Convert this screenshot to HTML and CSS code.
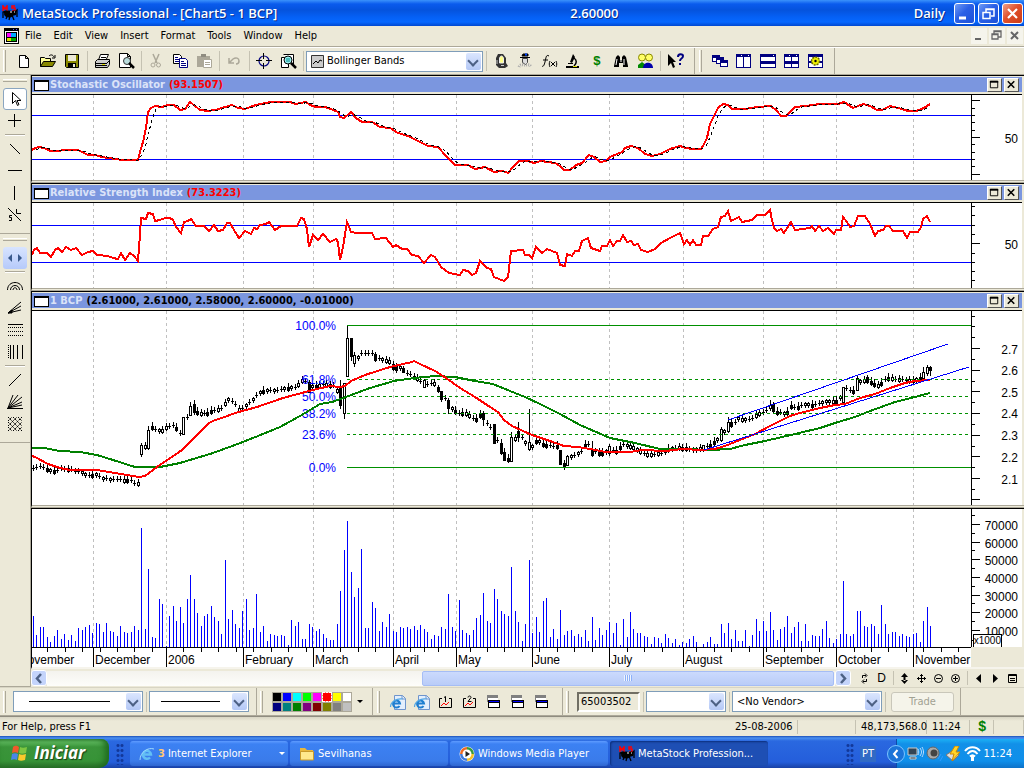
FILE: index.html
```html
<!DOCTYPE html>
<html lang="en">
<head>
    <meta charset="utf-8">
    <title>MetaStock Professional - [Chart5 - 1 BCP]</title>
    <link rel="stylesheet" href="styles.css">
</head>
<body>
    <!-- shared icons -->
    <svg class="defs" width="0" height="0" aria-hidden="true">
        <symbol id="spider" viewBox="0 0 16 16">
            <path d="M1 6V1l2 3 2-3v5M13 1h-3v2h3v3h-3" fill="none" stroke="#f00" stroke-width="1.500"/>
            <ellipse cx="7" cy="9" rx="5" ry="3.500"/><circle cx="12" cy="8" r="2.500"/>
            <path d="M1 13V7l3-1 2 3-2 5M8 11l-1 4M10 10l2 5M12 8l3-3v7M2 8l3-2" fill="none" stroke="#000" stroke-width="1.300"/>
            <path d="M8 7h2M12 7h1" stroke="#fff"/>
        </symbol>
        <symbol id="ie" viewBox="0 0 18 18">
            <path d="M5.500 2.500h8l3 3v11h-11z" fill="#e4effc" stroke="#6f95cc"/>
            <path d="M13 2.500v3.500h3.500" fill="none" stroke="#6f95cc"/>
            <path d="M4 10.500h7A3.500 3.500 0 1 0 10.500 13" fill="none" stroke="#1f7fd0" stroke-width="2"/>
            <path d="M1.500 14c0-5 6-9 12-8" fill="none" stroke="#4fa6e6" stroke-width="1.200"/>
        </symbol>
        <symbol id="win" viewBox="0 0 14 16">
            <g shape-rendering="crispEdges">
                <path d="M0 1h11v3H0zM0 4h1v4H0z" fill="#808080"/><path d="M1 4h10v3H1z" fill="#fff"/>
                <path d="M1 6h12v8H1z"/><path d="M2 7h10v1H2z" fill="#00f"/><path d="M2 9h10v4H2z" fill="#fff"/>
            </g>
        </symbol>
        <symbol id="max" viewBox="0 0 14 13"><path d="M2.500 2.500h8v7h-8z" fill="none" stroke="#000"/><path d="M2 3h9" stroke="#000" stroke-width="2"/></symbol>
        <symbol id="close" viewBox="0 0 14 13"><path d="M3 2.500l7 7M10 2.500l-7 7" stroke="#000" stroke-width="1.700"/></symbol>
    </svg>

    <header class="titlebar">
        <svg class="app-icon" width="16" height="16"><use href="#spider"/></svg>
        <h1>MetaStock Professional - [Chart5 - 1 BCP]</h1>
        <span class="last-price">2.60000</span>
        <span class="period">Daily</span>
        <button class="win-btn" aria-label="Minimize"><svg width="19" height="19"><path d="M4 14h7" stroke="#fff" stroke-width="3"/></svg></button>
        <button class="win-btn" aria-label="Restore"><svg width="19" height="19"><path d="M7 8V5h8v7h-3M7 5.500h8" fill="none" stroke="#fff" stroke-width="1.500"/><path d="M4 8.500h7v6H4z" fill="none" stroke="#fff" stroke-width="1.500"/></svg></button>
        <button class="win-btn win-close" aria-label="Close"><svg width="19" height="19"><path d="M5 5l9 9M14 5l-9 9" stroke="#fff" stroke-width="2.200"/></svg></button>
    </header>

    <nav class="menubar">
        <svg width="15" height="16" shape-rendering="crispEdges"><path d="M0 0h15v16H0z"/><path d="M1 3h13v12H1z" fill="#fff"/><path d="M9 1h1v1H9zM12 1h1v1h-1z" fill="#55f"/><path d="M2 4h11v10H2z"/><path d="M3 5h9v4H3z" fill="#f0f"/><path d="M7 5h5v4H7z" fill="#0af"/><path d="M3 10h9v3H3z" fill="#0a0"/><path d="M3 10h4v3H3z" fill="#dd0"/></svg>
        <a href="#">File</a>
        <a href="#">Edit</a>
        <a href="#">View</a>
        <a href="#">Insert</a>
        <a href="#">Format</a>
        <a href="#">Tools</a>
        <a href="#">Window</a>
        <a href="#">Help</a>
        <span class="mdi">
            <button aria-label="Minimize chart"><svg width="15" height="15"><path d="M4 11h6" stroke="#666" stroke-width="2"/></svg></button>
            <button aria-label="Restore chart"><svg width="15" height="15"><path d="M5 6V3h7v6H9M5 3.500h7M3 6h6v5H3zM3 6.500h6" fill="none" stroke="#666" stroke-width="1.300"/></svg></button>
            <button aria-label="Close chart"><svg width="15" height="15"><path d="M4 4l7 7M11 4l-7 7" stroke="#666" stroke-width="2"/></svg></button>
        </span>
    </nav>

    <div class="toolbar">
        <div class="band">
            <i class="grip"></i>
            <button class="tool" aria-label="New"><svg width="16" height="16"><path d="M3.500 2.500h6l3 3v9h-9zM9.500 2.500v3h3" fill="#fff" stroke="#000"/></svg></button>
            <button class="tool" aria-label="Open"><svg width="16" height="16"><path d="M.5 13.500v-9h4l1 1h5v3" fill="#ff9" stroke="#000"/><path d="M.5 13.500l3-5h12l-3 5z" fill="#880" stroke="#000"/><path d="M9 3c2-2 4-1 5 1M15 2v3h-3" fill="none" stroke="#000"/></svg></button>
            <button class="tool" aria-label="Save"><svg width="16" height="16"><path d="M1.500 1.500h13v13h-12l-1-1z" fill="#880" stroke="#000"/><path d="M4 2h8v6H4z" fill="#ece9d8"/><path d="M4 10h8v5H4z"/><path d="M9 11h2v3H9z" fill="#ece9d8"/></svg></button>
            <i class="sep"></i>
            <button class="tool" aria-label="Print"><svg width="17" height="16"><path d="M4.500 7l2-5.500h8L12 7" fill="#fff" stroke="#000"/><path d="M1.500 8.500l2-2h12v5l-2 3H1.500z" fill="#ccc" stroke="#000"/><path d="M2 10.500h11M2 12.500h11M7 4.500h5M13 10l3-3" stroke="#000"/><path d="M8 11.500h3" stroke="#dd0"/></svg></button>
            <button class="tool" aria-label="Print Preview"><svg width="17" height="16"><path d="M1.500.5h8l3 3v11h-11zM9.500.5v3h3" fill="#fff" stroke="#000"/><circle cx="9" cy="8" r="3.500" fill="#bdd" stroke="#333"/><path d="M11 10l5 5" stroke="#000" stroke-width="2.500"/></svg></button>
            <i class="sep"></i>
            <button class="tool" aria-label="Cut" disabled><svg width="16" height="16"><path d="M5 1l4 9M11 1L7 10" fill="none" stroke="#aca899" stroke-width="1.500"/><circle cx="5" cy="12" r="2" fill="none" stroke="#aca899"/><circle cx="10.500" cy="12" r="2" fill="none" stroke="#aca899"/></svg></button>
            <button class="tool" aria-label="Copy"><svg width="17" height="16"><path d="M1.500 1.500h6l2 2v7h-8z" fill="#fff" stroke="#000"/><path d="M7.500 5.500h6l2 2v7h-8z" fill="#fff" stroke="#000080"/><path d="M3 4.500h3M3 6.500h4M3 8.500h4M9 8.500h3M9 10.500h5M9 12.500h5" stroke="#000080"/></svg></button>
            <button class="tool" aria-label="Paste" disabled><svg width="17" height="16"><path d="M1 3h13v11H1z" fill="#aca899"/><path d="M5 1h5v3H5z" fill="#8f8c80"/><path d="M7.500 6.500h8v8h-8z" fill="#fff" stroke="#aca899"/><path d="M9 9.500h5M9 11.500h5" stroke="#aca899"/></svg></button>
            <i class="sep"></i>
            <button class="tool" aria-label="Undo" disabled><svg width="16" height="16"><path d="M3 10l4-4c3-2 6-1 6 2 0 2-1 3-3 3M3 5v5h5" fill="none" stroke="#aca899" stroke-width="1.500"/></svg></button>
            <i class="sep"></i>
            <button class="tool" aria-label="Crosshair"><svg width="16" height="16"><circle cx="8" cy="8" r="5" fill="none" stroke="#000080" stroke-width="1.200"/><path d="M7.500 0v6M7.500 10v6M0 7.500h6M10 7.500h6" stroke="#000"/></svg></button>
            <button class="tool" aria-label="Explorer"><svg width="17" height="16"><path d="M3.500 1.500h10v10M1.500 4.500h7v10h-7z" fill="#fff" stroke="#000"/><circle cx="8" cy="7" r="4" fill="#9ee" stroke="#000"/><path d="M6 6h4M6 8h4" stroke="#088"/><path d="M11 10l5 5" stroke="#000" stroke-width="2.500"/></svg></button>
            <i class="sep"></i>
            <span class="combo combo-indicator">
                <svg class="combo-icon" width="13" height="13"><path d="M.5.5h12v12H.5z" fill="#ccc" stroke="#333"/><path d="M2 9l3-3 2 2 2-3 2 1" fill="none" stroke="#000"/></svg>
                <select aria-label="Indicator"><option>Bollinger Bands</option></select>
            </span>
            <i class="sep"></i>
            <button class="tool" aria-label="Commentary"><svg width="16" height="16"><path d="M3 5l2-4h5l3 4v5l2 3-3 2H6l-3-3z" fill="#333"/><path d="M6.500 6c0-4 4-4 4 0v4h-4z" fill="#ff8" stroke="#eee"/><path d="M4 7v4M8 12.500h3" stroke="#ccc"/></svg></button>
            <button class="tool" aria-label="Expert Advisor"><svg width="16" height="16"><path d="M3 4.500h10M5 3h6V1H6z" stroke="#000"/><path d="M8 1.500h2" stroke="#04f" stroke-width="2"/><path d="M5.500 5.500h5v4l-2 2-3-2z" fill="#ddd" stroke="#444"/><path d="M2 14c1-3 4-2 6-2s5-1 6 2" fill="none" stroke="#aaa" stroke-width="3" stroke-dasharray="1 1"/></svg></button>
            <button class="tool" aria-label="Indicator Builder"><svg width="17" height="16"><path d="M8 3c-3-2-3 2-4 6s-2 5-3 4M2 7h5M9 8c-1 2-1 4 0 6M15 8c1 2 1 4 0 6M10 9l4 4M14 9l-4 4" fill="none" stroke="#000"/></svg></button>
            <button class="tool" aria-label="System Tester"><svg width="16" height="16"><path d="M8 1l2 3-3 6-2-1zM1 13h13v2H1zM3 10h5v1H3z"/><path d="M9 5c3 2 3 5 0 8" fill="none" stroke="#000" stroke-width="1.500"/><path d="M8 13.500h4" stroke="#dd0"/></svg></button>
            <button class="tool dollar" aria-label="Orders">$</button>
            <button class="tool" aria-label="Find"><svg width="16" height="16"><path d="M1 13l2-9 2-2 2 2v3h2V4l2-2 2 2 2 9v1h-5v-4H6v4H1z"/><path d="M3 12l1-6M11 12V6M8 7v2" stroke="#fff"/></svg></button>
            <button class="tool" aria-label="Users"><svg width="17" height="16"><circle cx="5" cy="4.500" r="3.500" fill="#ff6" stroke="#880"/><path d="M1 15v-3l4-3 4 3v3z" fill="#080"/><circle cx="12" cy="4.500" r="3.500" fill="#ff6" stroke="#880"/><path d="M6 15c0-7 10-7 10 0z" fill="#00a"/></svg></button>
            <i class="sep"></i>
            <button class="tool" aria-label="What's this?"><svg width="17" height="16"><path d="M1 1v12l3-3 2 5 2-1-2-5h3z"/><path d="M11 4c0-4 5-3 5-1 0 3-3 2-3 5M13 10v2" fill="none" stroke="#000080" stroke-width="2"/></svg></button>
        </div>
        <div class="band band-windows">
            <i class="grip"></i>
            <button class="tool" aria-label="Cascade"><svg width="17" height="16" shape-rendering="crispEdges"><path d="M0 2h8v7H0z" fill="#000080"/><path d="M1 5h6v3H1z" fill="#fff"/><path d="M4 4h8v7H4z" fill="#000080"/><path d="M5 7h6v3H5z" fill="#fff"/><path d="M8 7h8v7H8z" fill="#000080"/><path d="M9 10h6v3H9z" fill="#fff"/></svg></button>
            <button class="tool" aria-label="Tile Columns"><svg width="16" height="16" shape-rendering="crispEdges"><path d="M0 1h15v14H0z" fill="#000080"/><path d="M1 4h6v10H1zM8 4h6v10H8z" fill="#fff"/><path d="M5 2h1v1H5zM12 2h1v1h-1z" fill="#fff"/></svg></button>
            <button class="tool" aria-label="Tile Rows"><svg width="16" height="16" shape-rendering="crispEdges"><path d="M0 1h16v14H0z" fill="#000080"/><path d="M1 4h14v4H1zM1 11h14v3H1z" fill="#fff"/><path d="M13 2h1v1h-1z" fill="#fff"/></svg></button>
            <button class="tool" aria-label="Tile"><svg width="16" height="16" shape-rendering="crispEdges"><path d="M0 1h15v14H0z" fill="#000080"/><path d="M1 4h6v4H1zM8 4h6v4H8zM1 11h6v3H1zM8 11h6v3H8z" fill="#fff"/><path d="M5 2h1v1H5zM12 2h1v1h-1z" fill="#fff"/></svg></button>
            <button class="tool" aria-label="Stack Options"><svg width="16" height="16"><path d="M0 1h15v14H0z" fill="#000080"/><path d="M1 4h13v4H1zM1 10h13v4H1z" fill="#fff"/><circle cx="7.500" cy="8" r="4" fill="#ee0" stroke="#660" stroke-width="1.500" stroke-dasharray="2 1"/><circle cx="7.500" cy="8" r="1.200"/></svg></button>
        </div>
    </div>

    <div class="workspace">
        <aside class="side">
            <div class="side-band">
                <i class="hgrip"></i>
                <button class="side-tool pointer" aria-label="Pointer"><svg width="16" height="16"><path d="M5.500 1.500v11l3-3 2 5 1.500-1-2-4h4z" fill="#fff" stroke="#000"/></svg></button>
                <button class="side-tool" aria-label="Crosshair pointer"><svg width="16" height="16"><path d="M7.500 1v13M1 7.500h13" stroke="#000"/></svg></button>
                <i class="hsep"></i>
                <button class="side-tool" aria-label="Trendline"><svg width="16" height="16"><path d="M3 3l10 10" stroke="#000"/></svg></button>
                <button class="side-tool" aria-label="Horizontal line"><svg width="16" height="16"><path d="M1 7.500h14" stroke="#000"/></svg></button>
                <button class="side-tool" aria-label="Vertical line"><svg width="16" height="16"><path d="M7.500 1v14" stroke="#000"/></svg></button>
                <button class="side-tool" aria-label="Speed lines"><svg width="16" height="16"><path d="M1 1l13 13M9.500 2v4.500H14M5 8.500H2.500v2h2v3H2" fill="none" stroke="#000"/></svg></button>
            </div>
            <div class="side-band">
                <i class="hgrip"></i>
                <button class="side-tool active" aria-label="Scroll"><svg width="16" height="16"><path d="M5 4v8L1 8zM11 4v8l4-4z" fill="#3b5a8c"/></svg></button>
                <i class="hsep"></i>
                <button class="side-tool" aria-label="Fibonacci arcs"><svg width="16" height="16"><path d="M.5 12c0-10 15-10 15 0M3.500 12c0-6 9-6 9 0M6 12c0-3 4-3 4 0" fill="none" stroke="#000"/></svg></button>
                <button class="side-tool" aria-label="Fibonacci fan"><svg width="16" height="16"><path d="M1 13L14 2M1 13l13-7M1 13l13-3M1 13l4-3v3z" stroke="#000"/></svg></button>
                <button class="side-tool" aria-label="Fibonacci retracement"><svg width="16" height="16"><path d="M1 2.500h15" stroke="#000"/><path d="M1 5.500h15M1 9.500h15M1 13.500h15" stroke="#000" stroke-dasharray="1 1"/></svg></button>
                <button class="side-tool" aria-label="Fibonacci time zones"><svg width="16" height="16"><path d="M3.500 1v14M6.500 1v14M10.500 1v14M15.500 1v14" stroke="#000"/><path d="M1.500 1v14" stroke="#000" stroke-dasharray="1 1"/></svg></button>
                <i class="hsep"></i>
                <button class="side-tool" aria-label="Gann line"><svg width="16" height="16"><path d="M2 14L14 2" stroke="#000"/></svg></button>
                <button class="side-tool" aria-label="Gann fan"><svg width="16" height="16"><path d="M0 14.500h16M1 14L6 1M1 14L11 1M1 14L15 3M1 14l14-6M1 14l14-3" stroke="#000"/></svg></button>
                <button class="side-tool" aria-label="Gann grid"><svg width="16" height="16"><path d="M1 5l4-4M1 10l9-9M1 15L15 1M6 15l9-9M11 15l4-4M1 11l4 4M1 6l9 9M1 1l14 14M6 1l9 9M11 1l4 4" stroke="#000" stroke-dasharray="2 1"/></svg></button>
            </div>
        </aside>

        <main class="panes">
            <section class="pane">
                <header class="pane-title">
                    <i class="pane-icon"></i><h2>Stochastic Oscillator</h2><b class="value">(93.1507)</b>
                    <button class="pane-btn" aria-label="Maximize"><svg width="13" height="12"><use href="#max"/></svg></button>
                    <button class="pane-btn" aria-label="Close"><svg width="13" height="12"><use href="#close"/></svg></button>
                </header>
                <div class="plot-row"><svg class="plot plot-small" id="stoch"></svg><svg class="axis plot-small" id="stoch-axis"></svg></div>
            </section>
            <section class="pane">
                <header class="pane-title">
                    <i class="pane-icon"></i><h2>Relative Strength Index</h2><b class="value">(73.3223)</b>
                    <button class="pane-btn" aria-label="Maximize"><svg width="13" height="12"><use href="#max"/></svg></button>
                    <button class="pane-btn" aria-label="Close"><svg width="13" height="12"><use href="#close"/></svg></button>
                </header>
                <div class="plot-row"><svg class="plot plot-small" id="rsi"></svg><svg class="axis plot-small" id="rsi-axis"></svg></div>
            </section>
            <section class="pane">
                <header class="pane-title">
                    <i class="pane-icon"></i><h2>1 BCP</h2><b>(2.61000, 2.61000, 2.58000, 2.60000, -0.01000)</b>
                    <button class="pane-btn" aria-label="Maximize"><svg width="13" height="12"><use href="#max"/></svg></button>
                    <button class="pane-btn" aria-label="Close"><svg width="13" height="12"><use href="#close"/></svg></button>
                </header>
                <div class="plot-row"><svg class="plot plot-price" id="price"></svg><svg class="axis plot-price" id="price-axis"></svg></div>
            </section>
            <section class="pane pane-volume">
                <div class="plot-row"><svg class="plot plot-volume" id="volume"></svg><svg class="axis plot-volume" id="volume-axis"></svg></div>
                <svg class="timeline" id="timeline"></svg>
            </section>

            <div class="scroll-row">
                <button class="arrow" aria-label="Scroll left"><svg width="14" height="13"><path d="M9 2L5 6.500 9 11" fill="none" stroke="#4d6185" stroke-width="2.500"/></svg></button>
                <div class="track"><div class="thumb"></div></div>
                <button class="arrow" aria-label="Scroll right"><svg width="14" height="13"><path d="M5 2l4 4.500L5 11" fill="none" stroke="#4d6185" stroke-width="2.500"/></svg></button>
                <div class="scroll-tools">
                    <button aria-label="Refresh"><svg width="11" height="11"><path d="M3.500 5V2.500H7M6 .5l2 2-2 2M7.500 6v2.500H4M5 6.500l-2 2 2 2" fill="none" stroke="#000"/></svg></button>
                    <button class="daily" aria-label="Periodicity">D</button>
                    <i class="sep"></i>
                    <button aria-label="Rescale"><svg width="11" height="11"><path d="M5.500 0L9 4H2zM5.500 11L9 7H2zM4.500 3h2v5h-2z"/></svg></button>
                    <button aria-label="Move"><svg width="11" height="11"><path d="M5.500 1v9M1 5.500h9M4 2.500h3M4 8.500h3M2.500 4v3M8.500 4v3" stroke="#000"/></svg></button>
                    <button aria-label="Zoom out"><svg width="11" height="11"><circle cx="5.500" cy="5.500" r="4" fill="none" stroke="#000"/><path d="M3 5.500h5" stroke="#000"/></svg></button>
                    <button aria-label="Zoom in"><svg width="11" height="11"><circle cx="5.500" cy="5.500" r="4" fill="none" stroke="#000"/><path d="M3 5.500h5M5.500 3v5" stroke="#000"/></svg></button>
                    <i class="sep"></i>
                    <button aria-label="Previous"><svg width="11" height="11"><path d="M8 1v9L3 5.500z"/></svg></button>
                    <button aria-label="Next"><svg width="11" height="11"><path d="M3 1v9l5-4.500z"/></svg></button>
                    <button aria-label="Properties"><svg width="11" height="11"><path d="M1.500 1.500h8v8h-8zM2 2.500h7M3 5.500h5M3 7.500h5" fill="none" stroke="#000"/></svg></button>
                </div>
            </div>
        </main>
    </div>

    <div class="toolbar toolbar-bottom">
        <div class="band band-lines">
            <i class="grip"></i>
            <span class="combo combo-style"><select aria-label="Line style"><option></option></select></span>
            <i class="sep"></i>
            <span class="combo combo-weight"><select aria-label="Line weight"><option></option></select></span>
        </div>
        <div class="band band-colors">
            <i class="grip"></i>
            <div class="palette" id="palette"></div>
            <button class="more" aria-label="More colors"></button>
        </div>
        <div class="band band-web">
            <i class="grip"></i>
            <button class="tool" aria-label="Web page 1"><svg width="18" height="18"><use href="#ie"/></svg></button>
            <button class="tool" aria-label="Web page 2"><svg width="18" height="18"><use href="#ie"/></svg></button>
            <button class="tool" aria-label="Chart 1"><svg width="16" height="16"><path d="M4 4.500H1.500v9h12v-9H11M6 3.500l1.500-1V8" fill="none" stroke="#000"/><path d="M3 12l3-3 2 2 3-3" fill="none" stroke="#f00"/></svg></button>
            <button class="tool" aria-label="Chart 2"><svg width="16" height="16"><path d="M4 4.500H1.500v9h12v-9H11M6 3.500c0-2 3-2 3 0L6 7.500h3.500" fill="none" stroke="#000"/><path d="M3 12l3-3 2 2 3-3" fill="none" stroke="#f00"/></svg></button>
            <button class="tool" aria-label="Window 1"><svg width="14" height="16"><use href="#win"/></svg></button>
            <button class="tool" aria-label="Window 2"><svg width="14" height="16"><use href="#win"/></svg></button>
            <button class="tool" aria-label="Window 3"><svg width="14" height="16"><use href="#win"/></svg></button>
        </div>
        <div class="band band-trade">
            <i class="grip"></i>
            <input class="account" type="text" value="65003502" aria-label="Account">
            <i class="sep"></i>
            <span class="combo combo-order"><select aria-label="Order"><option></option></select></span>
            <i class="sep"></i>
            <span class="combo combo-vendor"><select aria-label="Vendor"><option>&lt;No Vendor&gt;</option></select></span>
            <i class="sep"></i>
            <button class="trade" disabled>Trade</button>
        </div>
    </div>

    <div class="statusbar">
        <span class="hint">For Help, press F1</span>
        <span class="cell cell-date">25-08-2006</span>
        <span class="cell cell-blank"></span>
        <span class="cell cell-value">48,173,568.0</span>
        <span class="cell cell-time">11:24</span>
        <span class="cell cell-dollar">$</span>
        <span class="cell cell-end"></span>
    </div>

    <footer class="taskbar">
        <button class="start">
            <svg width="20" height="20"><path d="M3 4c3-2 4-1 6 0L8 10c-2-1-4-1-6 0z" fill="#f0592b"/><path d="M10 4c2 1 4 1 7 0l-1 6c-3 1-5 1-7 0z" fill="#7ec641"/><path d="M2 11c2-1 4-1 6 0l-1 6c-2-1-4-1-6 0z" fill="#4a86e8"/><path d="M9 11c2 1 4 1 7 0l-1 6c-3 1-5 1-7 0z" fill="#fbc92c"/></svg>
            Iniciar
        </button>
        <i class="dots"></i>
        <button class="task"><svg width="16" height="16"><path d="M4 8.500h8A4 4 0 1 0 11 11.500" fill="none" stroke="#63c0f5" stroke-width="2.500"/><path d="M1 14C1 6 9 1 15 3" fill="none" stroke="#9fdcff"/></svg><b>3</b> Internet Explorer <i class="caret"></i></button>
        <button class="task"><svg width="16" height="16"><path d="M1 2h5l2 2h6v10H1z" fill="#e8b73c"/><path d="M1.500 14V5.500h13V14z" fill="#ffe88c" stroke="#c99a2a"/></svg>Sevilhanas</button>
        <button class="task"><svg width="16" height="16"><circle cx="8" cy="8" r="7.500" fill="#f5f5f5"/><path d="M8 1a7 7 0 0 1 7 7H8z" fill="#3a9b3a"/><path d="M8 1a7 7 0 0 0-7 7h7z" fill="#ee6a22"/><path d="M1 8a7 7 0 0 0 7 7V8z" fill="#3e7be0"/><path d="M15 8a7 7 0 0 1-7 7V8z" fill="#f4c12a"/><circle cx="8" cy="8" r="4.500" fill="#fff"/><path d="M6.500 5l4.500 3-4.500 3z" fill="#222"/></svg>Windows Media Player</button>
        <button class="task current"><svg width="16" height="16"><use href="#spider"/></svg>MetaStock Profession...</button>
        <i class="dots dots-right"></i>
        <span class="lang">PT</span>
        <div class="tray">
            <button class="chevron" aria-label="Show hidden icons"><svg width="18" height="18"><circle cx="9" cy="9" r="8.500" fill="#1b74d8" stroke="#7cc4ff"/><path d="M10.500 5L7 9l3.500 4" fill="none" stroke="#fff" stroke-width="2"/></svg></button>
            <svg width="17" height="16"><path d="M1 2h9v7H1zM3 11h6v2H3z" fill="#345" stroke="#ccc"/><path d="M11 3c1 2 1 4 0 6M13 2c2 3 2 5 0 8M15 1c2 4 2 6 0 10" fill="none" stroke="#bdf"/></svg>
            <svg width="17" height="16"><circle cx="7" cy="7" r="6" fill="#aaa" stroke="#666"/><circle cx="8" cy="7" r="3.500" fill="#444"/><path d="M12 13l3-5M14 15l3-5" stroke="#39f"/></svg>
            <svg width="17" height="16"><path d="M1 9l6-4 7 4-6 6z" fill="#ddd" stroke="#777"/><path d="M10 0L5 8h4l-2 7 8-9h-4l3-6z" fill="#ffd42a" stroke="#c80"/></svg>
            <svg width="17" height="16"><path d="M1 5c4-5 11-5 15 0M3.500 8c3-4 7-4 10 0M6 10.500c2-2 3-2 5 0" fill="none" stroke="#fff" stroke-width="2"/><path d="M8.500 10v5" stroke="#fff" stroke-width="3"/></svg>
            <time>11:24</time>
        </div>
    </footer>

    <script src="chart.js"></script>
</body>
</html>
```

FILE: styles.css
```css
* {
    box-sizing: border-box;
}
body {
    margin: 0;
    background: #ece9d8;
    color: #000;
    font-family: "DejaVu Sans Condensed", "DejaVu Sans", sans-serif;
    font-size: 11px;
    line-height: 14px;
}
button, select, input {
    margin: 0;
    padding: 0;
    border: 0;
    background: none;
    color: inherit;
    font: inherit;
}
svg {
    display: block;
    flex: none;
}
.defs {
    position: absolute;
}
h1, h2 {
    margin: 0;
    font-size: inherit;
}

/* title bar */
.titlebar {
    display: flex;
    align-items: center;
    height: 26px;
    padding: 0 1px 0 2px;
    background: linear-gradient(#3b92fb 0, #0a5bed 4px, #0553dd 10px, #0560f5 17px, #0668ff 22px, #0148d0 26px);
    color: #fff;
    font: 600 13px "Open Sans", "Noto Sans", sans-serif;
    text-shadow: 1px 1px 0 #0a2c8c;
}
.titlebar h1 {
    font-weight: 600;
}
.app-icon {
    margin-right: 4px;
}
.last-price {
    flex: 1;
    padding-left: 293px;
}
.period {
    margin-right: 9px;
}
.win-btn {
    width: 21px;
    height: 21px;
    margin-left: 3px;
    border: 1px solid #fff;
    border-radius: 3px;
    background: linear-gradient(135deg, #6f9bf5, #2a60e6 45%, #1c50d8);
}
.period + .win-btn {
    margin-left: 0;
}
.win-btn.win-close {
    background: linear-gradient(135deg, #f0a088, #e0502c 45%, #cc3c14);
}

/* menu */
.menubar {
    display: flex;
    align-items: center;
    gap: 12px;
    height: 21px;
    padding: 0 1px 1px 4px;
    border-bottom: 1px solid #aca899;
}
.menubar svg + a {
    margin-left: -6px;
}
.menubar a {
    color: #000;
    text-decoration: none;
}
.mdi {
    display: flex;
    gap: 2px;
    margin-left: auto;
}
.mdi button {
    width: 16px;
    height: 16px;
    background: #f5f4ec;
}

/* toolbars */
.toolbar {
    display: flex;
    height: 28px;
    border-top: 1px solid #fff;
    border-bottom: 1px solid #aca899;
}
.band {
    display: flex;
    align-items: center;
    width: 695px;
    padding-left: 3px;
    border-right: 1px solid #aca899;
}
.band-windows {
    width: 140px;
    padding-left: 4px;
}
.grip {
    flex: none;
    width: 3px;
    height: 22px;
    margin-right: 6px;
    border-left: 1px solid #fff;
    border-right: 1px solid #aca899;
}
.sep {
    flex: none;
    width: 1px;
    height: 20px;
    margin: 0 2px 0 3px;
    background: #c5c2b2;
}
.tool {
    display: flex;
    flex: none;
    align-items: center;
    justify-content: center;
    width: 24px;
    height: 24px;
}
.dollar {
    color: #008000;
    font: bold 13px "Liberation Mono", monospace;
}
.combo {
    position: relative;
    flex: none;
    height: 21px;
    background: #fff;
    border: 1px solid #7f9db9;
}
.combo select {
    width: 100%;
    height: 19px;
    padding-left: 4px;
    appearance: none;
}
.combo::after {
    content: "";
    position: absolute;
    top: 1px;
    right: 1px;
    width: 15px;
    height: 17px;
    border-radius: 2px;
    background: linear-gradient(#dbe6fe, #b4c8f6);
    pointer-events: none;
}
.combo::before {
    content: "";
    position: absolute;
    z-index: 1;
    top: 5px;
    right: 5px;
    width: 6px;
    height: 6px;
    border: solid #4d6185;
    border-width: 0 2px 2px 0;
    transform: rotate(45deg);
    pointer-events: none;
}
.combo-indicator {
    width: 177px;
}
.combo-indicator select {
    padding-left: 20px;
}
.combo-icon {
    position: absolute;
    top: 3px;
    left: 4px;
}

/* drawing tools */
.workspace {
    display: flex;
}
.side {
    width: 30px;
    border-bottom: 1px solid #aca899;
}
.side-band {
    display: flex;
    flex-direction: column;
    align-items: center;
    padding: 4px 0 7px;
    border-bottom: 1px solid #aca899;
}
.hgrip {
    width: 24px;
    height: 3px;
    margin-bottom: 6px;
    border-top: 1px solid #fff;
    border-bottom: 1px solid #aca899;
}
.hsep {
    width: 20px;
    height: 2px;
    margin: 2px 0;
    border-top: 1px solid #aca899;
    border-bottom: 1px solid #fff;
}
.side-tool {
    display: flex;
    align-items: center;
    justify-content: center;
    width: 24px;
    height: 22px;
    border-radius: 3px;
}
.side-tool.pointer {
    border: 1px solid #8aa5c0;
    background: #fff;
}
.side-tool.active {
    background: linear-gradient(#d8e4ff, #b6cafa);
}

/* chart panes */
.panes {
    flex: 1;
    min-width: 0;
    border-left: 1px solid #aca899;
}
.pane {
    padding-right: 2px;
    border-top: 1px solid #000;
    border-left: 1px solid #000;
    border-bottom: 3px double #aca899;
    background: #ece9d8;
}
.pane-volume {
    border-bottom: 2px solid #f6f4ec;
}
.pane-title {
    display: flex;
    align-items: center;
    height: 18px;
    padding: 0 3px 0 2px;
    border: solid #ece9d8;
    border-width: 1px 0 2px;
    background: #7b96df;
    font-weight: bold;
    line-height: 15px;
}
.pane-title h2 {
    margin-right: 4px;
    color: #dbe3f8;
}
.pane-title b {
    flex: 1;
}
.pane-title .value {
    color: #f00;
}
.pane-icon {
    width: 15px;
    height: 11px;
    margin: 2px 1px 0 0;
    border: 1px solid #000;
    border-top-width: 2px;
    background: #fff;
}
.pane-btn {
    width: 15px;
    height: 14px;
    margin-left: 2px;
    border: 1px solid;
    border-color: #fff #555 #555 #fff;
    background: #ece9d8;
}
.plot-row {
    display: flex;
    border-top: 1px solid #000;
    background: #fff;
}
.plot {
    flex: 1;
    min-width: 0;
    overflow: hidden;
}
.axis {
    width: 51px;
    border-left: 1px solid #000;
}
.plot-small {
    height: 85px;
}
.plot-price {
    height: 194px;
}
.plot-volume {
    height: 138px;
}
.pane-volume .plot-row {
    border-top: 0;
}
.timeline {
    width: calc(100% - 51px);
    height: 20px;
    border-top: 1px solid #000;
    background: #fff;
}
.plot text, .axis text, .timeline text {
    font: 12px "Liberation Sans", Arial, sans-serif;
}
.axis text {
    text-anchor: end;
}
.axis .unit {
    font-size: 10px;
}
.fib-label {
    fill: #00f;
    text-anchor: end;
}

/* scroll bar under the charts */
.scroll-row {
    display: flex;
    align-items: center;
    height: 18px;
}
.arrow {
    width: 16px;
    height: 16px;
    border: 1px solid #fff;
    border-radius: 3px;
    background: #c4d4fb;
}
.track {
    flex: 1;
    padding-left: 375px;
    background: linear-gradient(#f4f3ee, #fdfdfa);
}
.thumb {
    height: 15px;
    margin-right: 1px;
    border: 1px solid #a5bdf5;
    border-radius: 2px;
    background: repeating-linear-gradient(90deg, #eef4fe 0 1px, #8cb0f8 1px 2px) center / 8px 6px no-repeat, linear-gradient(#cbdafd, #b9ccf8);
}
.scroll-tools {
    display: flex;
    align-items: center;
    width: 173px;
    padding-left: 5px;
}
.scroll-tools button {
    display: flex;
    align-items: center;
    justify-content: center;
    width: 17px;
    height: 16px;
}
.scroll-tools .sep {
    height: 14px;
}
.scroll-tools .daily {
    font: 12px "Liberation Sans", Arial, sans-serif;
}

/* bottom toolbar */
.toolbar-bottom {
    height: 29px;
    border-top-color: #d8d5c4;
}
.band-lines {
    width: 257px;
}
.band-lines .grip {
    margin-right: 7px;
}
.combo-style {
    width: 130px;
}
.combo-style select {
    background: linear-gradient(#000, #000) 15px 9px / 81px 1px no-repeat;
}
.combo-weight {
    width: 100px;
}
.combo-weight select {
    background: linear-gradient(#000, #000) 11px 9px / 59px 1px no-repeat;
}
.band-colors {
    width: 116px;
}
.band-colors .grip {
    margin-right: 9px;
}
.palette {
    display: grid;
    grid-template-columns: repeat(8, 10px);
}
.swatch {
    width: 10px;
    height: 10px;
    border: 1px solid #aca899;
}
.swatch.selected {
    border: 1px dashed #fff;
}
.more {
    width: 0;
    height: 0;
    margin-left: 5px;
    border: solid transparent;
    border-width: 3px 3px 0;
    border-top-color: #000;
}
.band-web {
    width: 190px;
    padding-left: 4px;
}
.band-trade {
    width: 398px;
    padding-left: 3px;
}
.account {
    width: 63px;
    height: 20px;
    margin-left: 2px;
    padding: 0 2px;
    border: 2px solid;
    border-color: #716f64 #fff #fff #716f64;
}
.combo-order {
    width: 80px;
}
.combo-vendor {
    width: 150px;
}
.trade {
    width: 63px;
    height: 20px;
    margin-left: 3px;
    border: 1px solid #c9c7ba;
    border-radius: 3px;
    background: #f5f4ea;
    color: #a1a192;
}

/* status bar */
.statusbar {
    display: flex;
    align-items: center;
    height: 20px;
    padding-left: 2px;
    border-top: 1px solid #8f8c80;
    background: linear-gradient(#d8d5c4, #ece9d8 4px);
}
.hint {
    flex: 1;
}
.cell {
    padding-left: 5px;
    border-right: 1px solid #c5c2b2;
}
.cell-date {
    width: 68px;
}
.cell-blank {
    width: 58px;
    height: 14px;
}
.cell-value {
    width: 71px;
}
.cell-time {
    width: 43px;
}
.cell-dollar {
    width: 24px;
    padding-left: 8px;
    color: #008000;
    font: bold 14px/14px "Liberation Mono", monospace;
}
.cell-end {
    width: 30px;
    height: 14px;
}

/* task bar */
.taskbar {
    display: flex;
    align-items: stretch;
    height: 32px;
    padding-top: 3px;
    background: linear-gradient(#1c4fb8 0, #4a90f0 2px, #2a68e0 5px, #245edb 26px, #1941a5 32px);
    color: #fff;
    line-height: 28px;
}
.start {
    display: flex;
    align-items: center;
    width: 109px;
    padding: 0 0 2px 10px;
    gap: 4px;
    border-radius: 0 8px 10px 0;
    background: linear-gradient(#4a9a4a, #5fbb5f 3px, #3a943a 8px, #379337 22px, #2a702a);
    box-shadow: inset -4px 0 6px #1f6a1f;
    font: italic bold 17px "Open Sans", "Noto Sans", sans-serif;
    text-shadow: 1px 1px 1px #143c14;
}
.dots {
    width: 8px;
    height: 22px;
    margin: 4px 6px 0 7px;
    background: radial-gradient(circle, #12389a 1px, transparent 2px) 0 0 / 4px 5px;
}
.task {
    display: flex;
    flex: 0 1 158px;
    align-items: center;
    gap: 3px;
    height: 25px;
    margin: 2px 2px 0 0;
    padding: 0 9px;
    border-radius: 3px;
    background: linear-gradient(#5e9bff, #3c81f3 3px, #3a7bea 20px, #2f66d0);
    text-align: left;
    white-space: nowrap;
}
.task b {
    color: #ffc873;
}
.caret {
    margin-left: auto;
    margin-right: -6px;
    border: solid transparent;
    border-width: 3px 3px 0;
    border-top-color: #fff;
}
.task.current {
    background: #1e4fb4;
    box-shadow: inset 1px 1px 2px #0c2f7c;
}
.dots-right {
    margin: 4px 6px 0 auto;
}
.lang {
    width: 16px;
    height: 16px;
    margin: 7px 20px 0 0;
    background: #316ac5;
    line-height: 16px;
    text-align: center;
}
.tray {
    display: flex;
    align-items: center;
    width: 128px;
    gap: 2px;
    border-left: 1px solid #0d4ba8;
    background: linear-gradient(#1cb0f4, #1290e8 5px, #0f8fea 22px, #0e72c8);
}
.chevron {
    margin-left: -10px;
}
.tray time {
    flex: 1;
    padding-right: 12px;
    text-align: right;
}
```

FILE: chart.js
```js
// Canvas origin of each plot, data below is in sheet coordinates
const LEFT = 32;
const TOP = { stoch: 95, rsi: 203, price: 311, volume: 509 };

const months = [
    [93, 'December'], [166, '2006'], [243, 'February'], [313, 'March'], [393, 'April'], [456, 'May'],
    [532, 'June'], [609, 'July'], [683, 'August'], [763, 'September'], [836, 'October'], [913, 'November']
];
const weeks = [47,65,82,100,117,134,152,183,201,218,236,253,271,288,306,323,340,358,375,410,424,438,470,487,504,522,539,
    557,574,592,627,644,662,696,714,731,749,766,784,801,819,854,871,888,906,923,941,958];

const stoch = [32,150,35,148,39,147,44,148,50,151,57,151,65,150,78,150,84,153,88,155,95,155,102,157,115,159,123,160,138,160,
    140,152,143,142,146,128,148,112,151,108,155,106,162,107,168,105,174,105,180,110,185,109,190,102,195,106,200,110,208,111,
    215,110,222,108,232,105,238,108,245,109,250,107,256,105,265,103,272,102,290,102,296,104,300,103,306,102,310,105,316,107,
    325,107,333,110,338,112,340,117,344,118,351,112,356,118,362,122,372,122,380,127,390,128,398,133,408,136,418,141,428,146,
    438,147,446,156,455,165,468,165,475,169,485,167,494,172,503,171,508,173,513,167,519,161,528,161,534,163,541,161,555,163,
    560,166,564,170,570,170,576,165,582,163,589,155,594,157,600,162,606,161,610,157,617,154,622,152,625,148,631,146,638,148,
    645,154,652,156,660,154,670,149,680,146,686,148,692,149,701,149,704,144,707,138,710,124,714,116,718,108,723,104,728,105,
    732,109,745,109,757,107,771,106,777,111,781,116,786,116,795,107,806,106,820,104,838,104,844,102,853,108,863,104,870,106,
    877,110,882,110,890,106,898,108,908,111,916,111,924,108,930,104];

const rsi = [32,255,34,250,37,248,40,253,47,253,51,257,55,250,58,248,62,252,66,247,71,250,76,248,82,255,88,252,93,251,97,255,
    108,256,113,258,118,259,121,253,125,260,130,253,134,256,138,261,140,235,141,218,146,219,148,213,153,214,155,221,160,220,
    165,218,170,218,173,220,176,227,181,233,184,222,188,221,191,219,196,226,204,226,209,231,214,225,218,231,223,230,227,223,
    230,223,234,230,239,238,245,231,251,234,254,228,257,229,260,225,266,224,269,222,275,230,281,226,297,226,301,218,304,219,
    307,229,309,247,313,235,318,240,323,234,330,242,336,239,338,242,340,260,343,247,347,222,351,232,357,233,372,233,375,239,
    386,238,393,247,396,245,402,249,407,249,412,255,418,256,424,263,431,255,435,257,441,267,449,273,460,275,463,270,468,271,
    472,275,476,273,480,261,487,268,491,269,494,277,504,281,508,277,511,251,523,250,525,255,529,255,532,258,536,247,542,253,
    547,249,557,253,560,265,565,266,567,254,572,256,575,251,579,251,582,241,588,238,591,248,600,251,602,246,607,246,610,240,
    613,246,617,241,620,241,623,235,627,242,631,241,634,245,638,244,641,250,648,252,655,249,661,243,670,238,680,233,684,244,
    687,240,690,245,693,240,696,245,701,245,703,236,708,236,713,229,718,227,721,217,725,216,728,211,731,221,739,217,742,222,
    752,220,757,215,765,215,770,210,772,220,774,228,777,231,781,229,784,233,791,222,795,230,810,228,812,226,815,231,819,226,
    823,231,828,228,834,234,836,230,841,230,843,217,847,222,850,227,854,226,858,216,865,216,870,224,875,236,878,231,883,230,
    886,226,889,226,893,231,903,231,907,238,910,232,918,232,921,227,923,219,927,216,930,222];

const fastAverage = [32,456,35,457,48,464,60,468,70,470,97,470,115,473,139,477,145,476,157,467,182,450,209,423,215,420,222,418,
    235,413,257,407,283,398,313,390,330,386,340,387,345,386,351,381,365,375,390,367,412,362,414,361,420,364,435,371,446,378,
    460,388,475,397,490,407,498,412,504,420,512,426,532,435,550,441,564,446,578,447,590,449,606,452,630,452,642,450,665,451,
    683,449,700,450,715,449,725,446,740,440,755,434,770,426,790,416,800,413,820,408,835,405,845,404,860,398,875,394,890,388,
    905,383,915,381,930,380];
const slowAverage = [32,448,44,448,60,451,80,452,97,455,113,460,135,467,160,467,180,463,210,454,235,445,258,436,280,427,300,416,
    320,404,332,402,346,397,370,388,394,381,414,378,435,376,455,377,475,381,493,384,510,391,525,397,540,404,560,414,580,425,
    610,438,635,443,660,449,683,449,710,450,730,449,745,445,765,441,795,434,820,428,835,423,855,417,870,411,895,402,915,397,930,393];

// middle of the small candles
const mid = [33,468,41,466,47,469,54,471,60,468,65,469,80,470,83,473,90,475,96,474,104,478,114,479,131,480,134,483,139,483,
    140,450,145,446,149,430,152,427,155,429,162,430,166,427,173,425,180,433,184,424,187,417,190,411,194,407,198,413,208,413,
    215,409,222,408,225,403,229,398,233,402,239,409,243,408,247,404,253,399,257,394,264,390,278,390,285,388,295,387,300,382,
    303,379,309,386,314,386,323,384,333,385,339,392,344,390,350,350,354,359,358,357,361,353,372,353,376,357,386,360,390,361,
    394,365,400,367,407,373,414,376,424,384,435,383,442,394,449,404,454,410,460,413,466,413,473,418,477,419,481,413,485,418,
    488,425,494,430,498,443,504,457,509,459,513,440,518,435,522,437,526,443,532,446,537,440,544,445,558,446,564,465,571,456,
    581,451,586,443,590,444,594,450,600,454,609,449,616,451,623,444,634,447,641,452,648,454,662,453,668,449,678,447,686,448,
    693,450,701,448,708,446,714,442,721,434,728,426,733,425,738,418,745,419,753,418,757,414,763,412,770,407,777,412,786,413,
    791,406,797,407,804,404,813,405,825,401,837,401,842,394,846,388,854,391,857,384,862,379,870,381,876,386,882,382,886,378,
    900,379,910,380,919,379,923,375,930,369];

// x, body top, body bottom, high, low, filled
const bigCandles = [
    [141,445,454,443,456,0],[148,430,448,426,449,0],[183,417,434,417,434,0],[190,406,415,402,415,0],[194,404,412,400,414,1],
    [309,382,392,380,392,1],[340,387,405,380,408,1],[344,383,413,383,418,0],[347,338,376,325,376,0],[351,338,356,338,360,1],
    [354,355,363,352,366,0],[375,354,360,352,361,1],[393,364,369,361,370,1],[396,366,370,363,372,1],[402,368,372,366,372,1],
    [423,380,387,379,387,0],[438,387,391,385,392,1],[442,391,399,391,401,1],[449,400,408,398,413,1],[484,413,419,411,425,1],
    [494,424,443,424,443,1],[501,443,453,439,454,1],[504,452,460,448,460,1],[511,437,461,432,461,0],[517,431,437,422,441,1],
    [529,442,449,409,450,0],[560,450,464,450,464,1],[564,463,467,460,469,1],[567,456,465,455,465,0],[592,450,455,441,456,1],
    [609,446,453,444,455,0],[704,445,450,445,451,0],[722,429,440,427,441,0],[729,422,431,417,432,0],[732,422,426,419,427,1],
    [770,405,408,400,410,0],[774,404,411,402,412,1],[842,387,402,387,404,0],[857,378,390,375,390,0],[868,377,382,375,383,1],
    [922,372,378,367,379,0],[927,367,373,365,375,0],[930,367,370,366,375,1]
];

const volume = [31,12,20,20,10,5,11,17,8,13,7,12,6,19,17,20,22,14,24,23,15,24,16,15,11,21,15,14,15,21,17,119,18,78,10,9,48,43,
    1,31,41,26,40,24,48,72,48,34,21,31,33,41,30,26,13,87,28,37,23,19,36,48,17,19,53,15,21,6,13,12,11,12,11,2,27,21,25,8,8,23,
    20,16,18,13,9,7,7,23,56,97,126,75,50,59,98,19,19,45,39,16,25,20,33,16,15,20,19,20,18,21,17,22,18,15,8,12,11,20,18,53,20,
    16,47,17,14,12,17,29,32,54,26,24,58,48,36,33,31,80,36,25,6,23,87,14,30,15,46,49,10,18,8,37,12,16,17,11,13,10,17,6,30,7,19,
    12,17,25,14,24,2,28,10,35,18,14,14,11,10,3,10,9,4,13,9,4,8,2,5,4,8,11,5,0,3,5,10,3,3,23,14,24,8,17,6,6,17,1,12,28,16,26,
    16,35,17,7,18,20,31,14,20,25,6,23,6,12,11,11,18,26,9,4,8,13,66,13,11,13,36,36,21,20,23,21,13,42,23,13,15,15,11,13,11,10,
    13,14,5,26,40,21];

const colors = ['#000','#00f','#0ff','#0f0','#f0f','#f00','#ff0','#fff',
    '#000080','#008080','#008000','#800080','#800000','#808000','#808080','#c0c0c0'];

const barX = i => Math.floor(33.4 + i * 897.4 / (volume.length - 1));

function lineAt(data, x) {
    for (let i = 2; i < data.length; i += 2) {
        if (x <= data[i]) {
            const t = (x - data[i - 2]) / (data[i] - data[i - 2]);
            return data[i - 1] + t * (data[i + 1] - data[i - 1]);
        }
    }
    return data[data.length - 1];
}

function polyline(data, color, width, extra = '') {
    return `<polyline points="${data.join(' ')}" fill="none" stroke="${color}" stroke-width="${width}" shape-rendering="crispEdges" ${extra}/>`;
}

function hline(y, color) {
    return `<path d="M0 ${y + .5}h4000" stroke="${color}" shape-rendering="crispEdges"/>`;
}

function grid(height) {
    return months.map(m =>
        `<path d="M${m[0] - LEFT + .5} 0v${height}" stroke="#c0c0c0" stroke-dasharray="3 3" shape-rendering="crispEdges"/>`).join('');
}

function draw(id, height, body) {
    document.getElementById(id).innerHTML =
        grid(height) + `<g transform="translate(${-LEFT} ${-TOP[id]})">${body}</g>`;
}

function axis(id, longTicks, shortTicks, labels) {
    const top = TOP[id];
    let out = '';
    longTicks.forEach(y => out += `<path d="M0 ${y - top + .5}h8" stroke="#000"/>`);
    shortTicks.forEach(y => out += `<path d="M0 ${y - top + .5}h3" stroke="#000"/>`);
    labels.forEach(l => out += `<text x="46" y="${l[0] - top + 5}">${l[1]}</text>`);
    document.getElementById(id + '-axis').innerHTML = out;
}

// Stochastic with its dashed signal line
const signal = [];
for (let x = 36; x <= 930; x += 2) {
    signal.push(x, (lineAt(stoch, x) + lineAt(stoch, x - 4) + lineAt(stoch, x - 8)) / 3);
}
draw('stoch', 85, hline(115, '#00f') + hline(159, '#00f') + polyline(stoch, '#f00', 2) +
    polyline(signal, '#000', 1, 'stroke-dasharray="3 3"'));
axis('stoch', [100, 137, 174], [108, 115, 122, 130, 144, 152, 159, 166], [[138, '50']]);

draw('rsi', 85, hline(225, '#00f') + hline(262, '#00f') + polyline(rsi, '#f00', 2));
axis('rsi', [243], [206, 215, 225, 234, 253, 262, 271, 280], [[244, '50']]);

// Price
function candle(x, top, bottom, high, low, filled) {
    return `<path d="M${x + .5} ${high}V${low + 1}" stroke="#000"/>` +
        `<rect x="${x - .5}" y="${top + .5}" width="2" height="${Math.max(bottom - top, 1)}" fill="${filled ? '#000' : '#fff'}" stroke="#000"/>`;
}
const big = {};
bigCandles.forEach(c => {
    let best = 0;
    volume.forEach((v, i) => { if (Math.abs(barX(i) - c[0]) < Math.abs(barX(best) - c[0])) best = i; });
    big[best] = c;
});
let candles = '';
volume.forEach((v, i) => {
    const x = barX(i);
    if (big[i]) {
        candles += candle(x, ...big[i].slice(1));
        return;
    }
    const y = Math.round(lineAt(mid, x));
    const k = (i * 7 + v) % 5;
    // doji: open and close on the same level
    if (k === 4 || k === 1) {
        candles += `<path d="M${x - 1} ${y + .5}h3M${x + .5} ${y - 3}v6" stroke="#000"/>`;
        return;
    }
    candles += candle(x, y - 1, y + (k ? 2 : 1), y - 2 - k, y + 3, k === 3);
});

let fib = '';
[[325, '100.0%'], [379, '61.8%'], [396, '50.0%'], [413, '38.2%'], [434, '23.6%'], [467, '0.0%']].forEach(f => {
    const solid = f[0] === 325 || f[0] === 467;
    fib += `<path d="M347 ${f[0] + .5}h4000" stroke="#009000" ${solid ? '' : 'stroke-dasharray="3 3"'}/>`;
    fib += `<text class="fib-label" x="336" y="${f[0] + 5}">${f[1]}</text>`;
});
draw('price', 194, `<g shape-rendering="crispEdges">${candles}${fib}</g>` +
    polyline(slowAverage, '#008000', 2) + polyline(fastAverage, '#f00', 2) +
    polyline([728, 420, 948, 344], '#00f', 1) + polyline([704, 450, 969, 367], '#00f', 1));
axis('price', [348, 370, 391, 413, 435, 456, 478, 499], [316, 326, 337, 359, 381, 402, 424, 446, 467, 489],
    [[349, '2.7'], [370, '2.6'], [392, '2.5'], [413, '2.4'], [435, '2.3'], [457, '2.2'], [479, '2.1']]);

// Volume
draw('volume', 138, volume.map((v, i) =>
    `<path d="M${barX(i) + .5} ${647 - v}v${v}" stroke="#00f" shape-rendering="crispEdges"/>`).join(''));
axis('volume', [524, 542, 559, 577, 595, 612, 630], [515, 533, 550, 568, 586, 603, 621, 640],
    [[525, '70000'], [543, '60000'], [560, '50000'], [578, '40000'], [596, '30000'], [613, '20000'], [631, '10000']]);
document.getElementById('volume-axis').innerHTML +=
    '<rect x="1.5" y="125.5" width="28" height="14" fill="#fff" stroke="#000"/><text class="unit" x="29" y="135">x1000</text>';

document.getElementById('timeline').innerHTML =
    weeks.map(x => `<path d="M${x - LEFT + .5} 0v4" stroke="#000"/>`).join('') +
    '<text x="-13" y="16">November</text>' +
    months.map(m => `<path d="M${m[0] - LEFT + .5} 0v19" stroke="#000"/><text x="${m[0] - LEFT + 2}" y="16">${m[1]}</text>`).join('');

document.getElementById('palette').innerHTML =
    colors.map((c, i) => `<button class="swatch${i === 5 ? ' selected' : ''}" style="background:${c}" aria-label="${c}"></button>`).join('');
```
